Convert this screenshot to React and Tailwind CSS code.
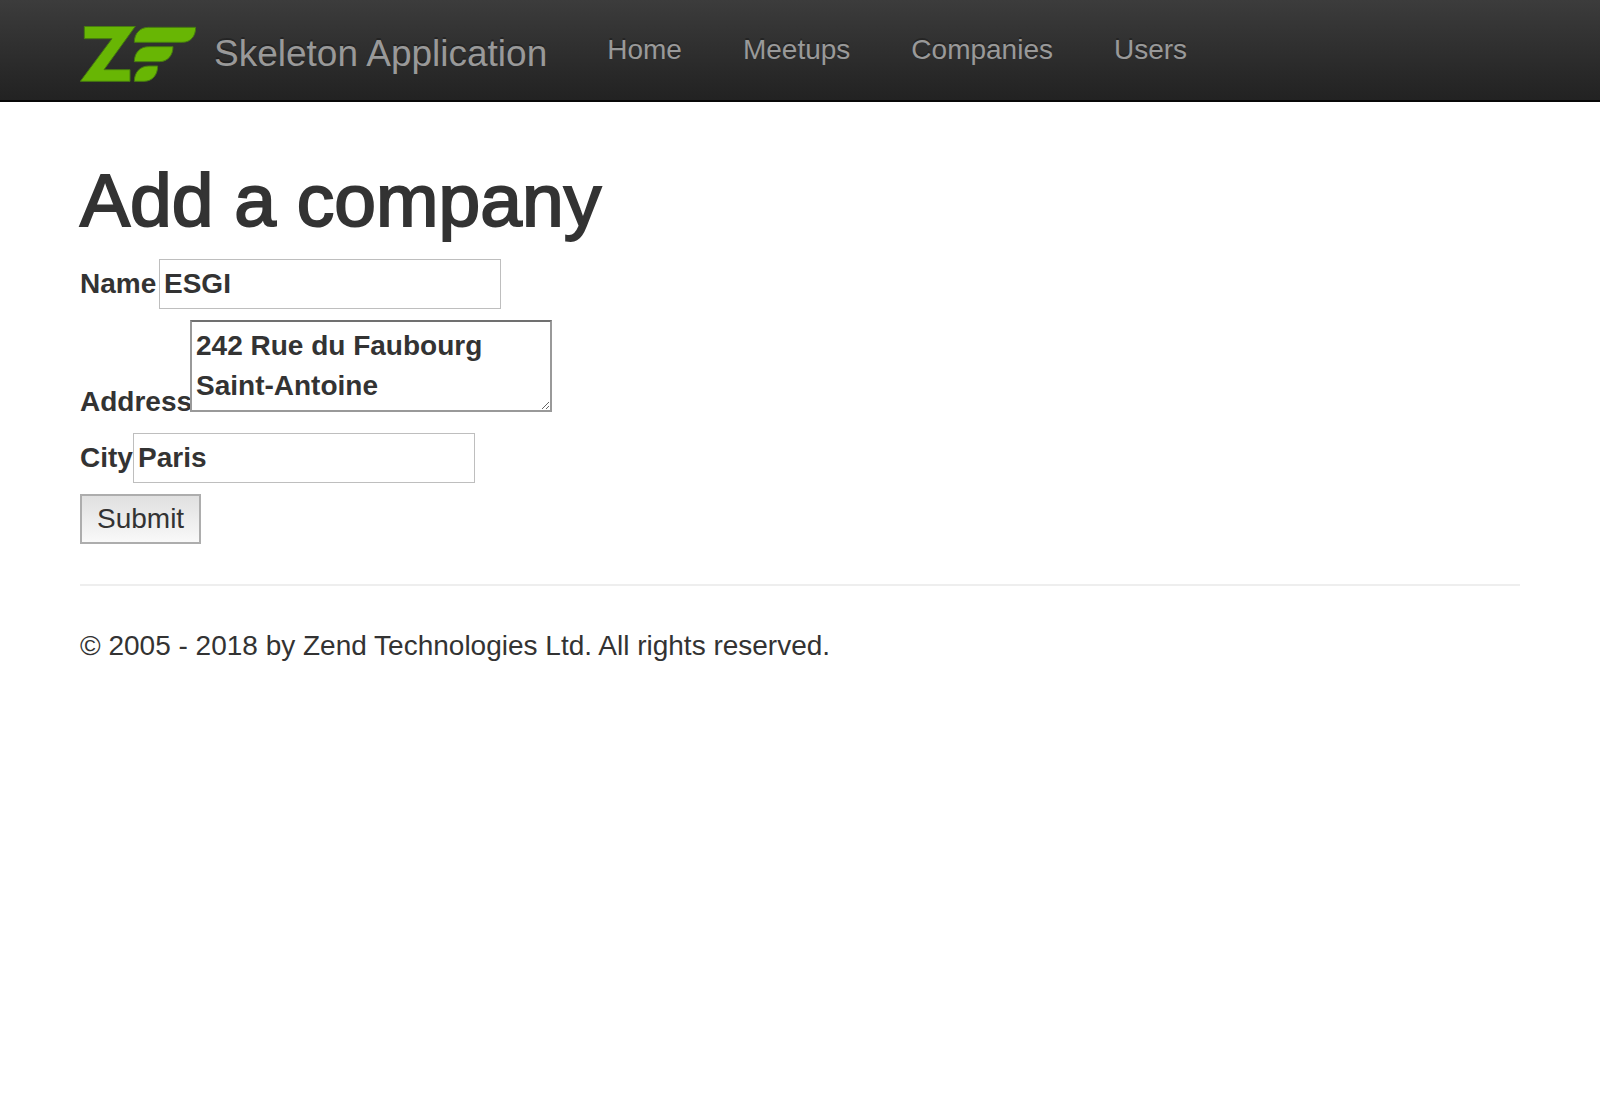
const navItems = ["Home", "Meetups", "Companies", "Users"];

function Logo() {
  return (
    <svg viewBox="0 0 348 168" className="h-14 w-[116px] shrink-0" aria-hidden="true">
      <g fill="#68b604" stroke="#457a10" strokeWidth="3">
        <path d="M13 1H166L72 131H150V166H1L96 38H13Z" />
        <path d="M163 49C163 22 180 4 206 4H347C347 30 333 49 307 49Z" />
        <path d="M163 107C163 80 180 62 206 62H279C279 88 263 107 238 107Z" />
        <path d="M163 166C163 139 180 120 206 120H233C233 147 217 166 192 166Z" />
      </g>
    </svg>
  );
}

function TextField({ id, label, value, labelClass }) {
  return (
    <div className="flex items-center">
      <label htmlFor={id} className={`font-bold ${labelClass}`}>{label}</label>
      <input
        id={id}
        type="text"
        defaultValue={value}
        className="h-[50px] w-[342px] border border-[#bebebe] bg-white px-1 font-bold outline-none"
      />
    </div>
  );
}

export default function App() {
  return (
    <div className="min-h-screen bg-white font-['Liberation_Sans',Arial,sans-serif] text-[28px] leading-10 text-[#333]">
      <nav className="border-b-2 border-[#080808] bg-linear-to-b from-[#3c3c3c] to-[#222] px-20 text-[#999] text-shadow-[0_-2px_0_rgba(0,0,0,0.25)]">
        <div className="flex h-[100px] items-center">
          <a href="#" className="flex items-center gap-[18px] pt-2 pr-[30px] text-[37px]">
            <Logo />
            <span className="whitespace-nowrap">Skeleton Application</span>
          </a>
          <ul className="flex gap-px">
            {navItems.map((item) => (
              <li key={item}>
                <a href="#" className="block px-[30px]">{item}</a>
              </li>
            ))}
          </ul>
        </div>
      </nav>

      <main className="px-20 pt-[58px]">
        <h1 className="mb-[19px] text-[75px] leading-20 [-webkit-text-stroke:2px_#333]">Add a company</h1>
        <form className="flex flex-col items-start gap-[11px]" onSubmit={(e) => e.preventDefault()}>
          <TextField id="name" label="Name" value="ESGI" labelClass="w-[79px]" />
          <div className="flex items-end">
            <label htmlFor="address" className="w-[110px] font-bold">Address</label>
            <textarea
              id="address"
              defaultValue="242 Rue du Faubourg Saint-Antoine"
              className="mb-[10px] h-[92px] w-[362px] overflow-hidden border-2 border-[#999] border-t-[#707070] bg-white p-1 font-bold outline-none"
            />
          </div>
          <TextField id="city" label="City" value="Paris" labelClass="w-[53px]" />
          <button
            type="submit"
            className="h-[50px] border-2 border-[#adadad] bg-linear-to-b from-[#e0e0e0] to-[#f9f9f9] px-[15px]"
          >
            Submit
          </button>
        </form>
        <hr className="my-10 border-t-2 border-[#eee]" />
        <footer>
          <p>© 2005 - 2018 by Zend Technologies Ltd. All rights reserved.</p>
        </footer>
      </main>
    </div>
  );
}
